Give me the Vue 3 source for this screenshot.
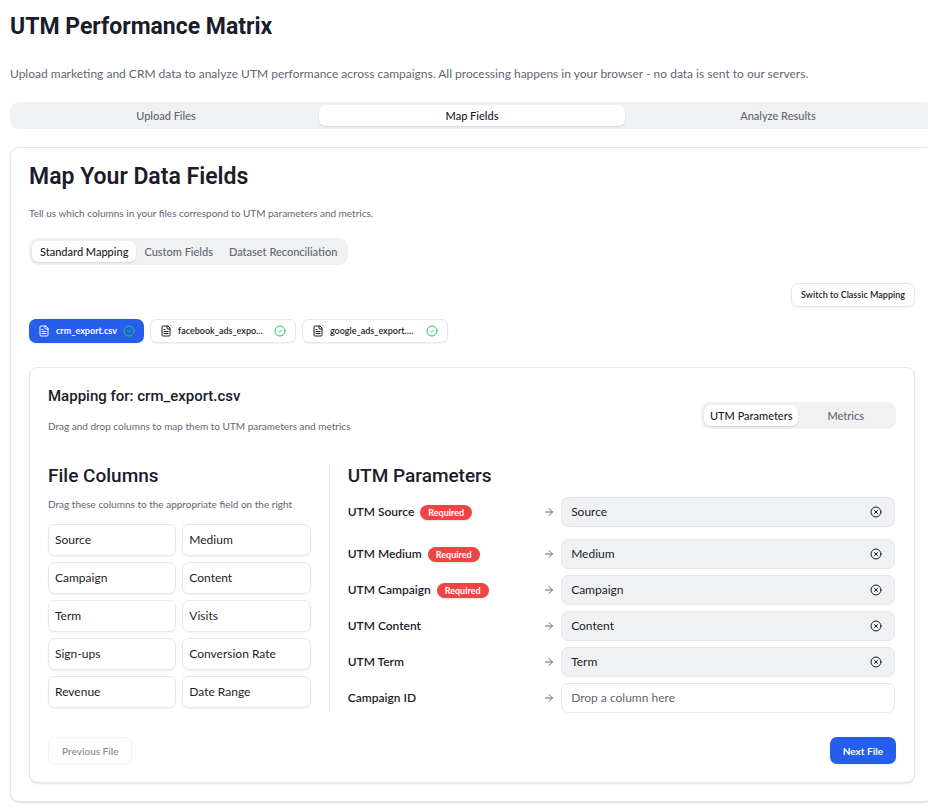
<script setup>
import { ref } from 'vue'

const steps = ['Upload Files', 'Map Fields', 'Analyze Results']
const modes = ['Standard Mapping', 'Custom Fields', 'Dataset Reconciliation']
const groups = ['UTM Parameters', 'Metrics']
const files = [
  { name: 'crm_export.csv', long: false },
  { name: 'facebook_ads_expo…', long: true },
  { name: 'google_ads_export.…', long: true },
]
const columns = [
  'Source', 'Medium', 'Campaign', 'Content', 'Term',
  'Visits', 'Sign-ups', 'Conversion Rate', 'Revenue', 'Date Range',
]
const fields = ref([
  { label: 'UTM Source', required: true, value: 'Source' },
  { label: 'UTM Medium', required: true, value: 'Medium' },
  { label: 'UTM Campaign', required: true, value: 'Campaign' },
  { label: 'UTM Content', required: false, value: 'Content' },
  { label: 'UTM Term', required: false, value: 'Term' },
  { label: 'Campaign ID', required: false, value: '' },
])

const step = ref('Map Fields')
const mode = ref('Standard Mapping')
const group = ref('UTM Parameters')
const file = ref(0)

function startDrag(event, column) {
  event.dataTransfer.setData('text/plain', column)
}
function dropOn(event, field) {
  field.value = event.dataTransfer.getData('text/plain')
}
</script>

<template>
  <main class="page">
    <div class="content">
      <h1>UTM Performance Matrix</h1>
      <p class="intro">Upload marketing and CRM data to analyze UTM performance across campaigns. All processing happens in your browser - no data is sent to our servers.</p>

      <nav class="tabs steps">
        <button v-for="s in steps" :key="s" type="button" class="tab" :class="{ active: s === step }" @click="step = s">{{ s }}</button>
      </nav>

      <section class="card outer">
        <h2>Map Your Data Fields</h2>
        <p class="note lead">Tell us which columns in your files correspond to UTM parameters and metrics.</p>

        <div class="tabs modes">
          <button v-for="m in modes" :key="m" type="button" class="tab" :class="{ active: m === mode }" @click="mode = m">{{ m }}</button>
        </div>

        <div class="switch-row">
          <button type="button" class="button small">Switch to Classic Mapping</button>
        </div>

        <div class="files">
          <button v-for="(f, i) in files" :key="f.name" type="button" class="button small file" :class="{ selected: i === file }" @click="file = i">
            <svg class="icon" viewBox="0 0 24 24" aria-hidden="true">
              <path d="M15 2H6a2 2 0 0 0-2 2v16a2 2 0 0 0 2 2h12a2 2 0 0 0 2-2V7Z" />
              <path d="M14 2v4a2 2 0 0 0 2 2h4M10 9H8M16 13H8M16 17H8" />
            </svg>
            <span class="file-name" :class="{ long: f.long }">{{ f.name }}</span>
            <svg class="icon done" viewBox="0 0 24 24" aria-hidden="true">
              <circle cx="12" cy="12" r="10" />
              <path d="m9 12 2 2 4-4" />
            </svg>
          </button>
        </div>

        <section class="card inner">
          <header class="inner-head">
            <div class="inner-title">
              <h3>Mapping for: crm_export.csv</h3>
              <p class="note">Drag and drop columns to map them to UTM parameters and metrics</p>
            </div>
            <div class="tabs groups">
              <button v-for="g in groups" :key="g" type="button" class="tab" :class="{ active: g === group }" @click="group = g">{{ g }}</button>
            </div>
          </header>

          <div class="mapping">
            <div class="source">
              <h4>File Columns</h4>
              <p class="note hint">Drag these columns to the appropriate field on the right</p>
              <ul class="columns">
                <li v-for="c in columns" :key="c" draggable="true" @dragstart="startDrag($event, c)">{{ c }}</li>
              </ul>
            </div>

            <div class="target">
              <h4>UTM Parameters</h4>
              <ul class="fields">
                <li v-for="f in fields" :key="f.label" class="field">
                  <span class="field-label">{{ f.label }}<span v-if="f.required" class="badge">Required</span></span>
                  <svg class="icon arrow" viewBox="0 0 24 24" aria-hidden="true">
                    <path d="M5 12h14M12 5l7 7-7 7" />
                  </svg>
                  <div class="drop" :class="{ filled: f.value }" @dragover.prevent @drop.prevent="dropOn($event, f)">
                    <span>{{ f.value || 'Drop a column here' }}</span>
                    <button v-if="f.value" type="button" class="clear" :aria-label="'Clear ' + f.label" @click="f.value = ''">
                      <svg class="icon" viewBox="0 0 24 24" aria-hidden="true">
                        <circle cx="12" cy="12" r="10" />
                        <path d="m15 9-6 6M9 9l6 6" />
                      </svg>
                    </button>
                  </div>
                </li>
              </ul>
            </div>
          </div>

          <footer class="actions">
            <button type="button" class="button" disabled>Previous File</button>
            <button type="button" class="button primary">Next File</button>
          </footer>
        </section>
      </section>
    </div>
  </main>
</template>

<style>
body {
  background: #fff;
}
</style>

<style scoped>
* {
  box-sizing: border-box;
}
.page {
  --ink: #1b1c2b;
  --muted: #636574;
  --line: #e5e7eb;
  --fill: #f0f1f3;
  --blue: #245eeb;
  overflow: hidden;
  padding: 11px 0 8px 10px;
  color: var(--ink);
  font-family: Lato, "Open Sans", sans-serif;
  font-size: 12px;
  line-height: 18px;
}
.content {
  margin-right: -6px;
}
h1, h2, h3, h4, p, ul {
  margin: 0;
  padding: 0;
}
ul {
  list-style: none;
}
h1, h2, h3, h4 {
  font-family: Roboto, sans-serif;
}
h1 {
  font-size: 23px;
  font-weight: 700;
  line-height: 32px;
}
h2 {
  font-size: 23px;
  font-weight: 600;
  line-height: 28px;
}
h3 {
  font-size: 15px;
  font-weight: 500;
  line-height: 20px;
}
h4 {
  font-size: 19px;
  font-weight: 500;
  line-height: 24px;
}
button {
  margin: 0;
  font: inherit;
  cursor: pointer;
}
.intro {
  margin-top: 22px;
  color: var(--muted);
}
.note {
  color: var(--muted);
  font-size: 10px;
  line-height: 16px;
}
.icon {
  display: block;
  flex: none;
  width: 12px;
  height: 12px;
  fill: none;
  stroke: currentColor;
  stroke-width: 2;
  stroke-linecap: round;
  stroke-linejoin: round;
}

.tabs {
  display: flex;
  padding: 3px;
  border-radius: 9px;
  background: var(--fill);
}
.tab {
  padding: 0 8px;
  border: 0;
  border-radius: 7px;
  background: none;
  color: var(--muted);
  font-size: 11px;
  font-weight: 500;
  line-height: 21px;
  white-space: nowrap;
}
.tab.active {
  background: #fff;
  color: var(--ink);
  box-shadow: 0 1px 2px rgb(0 0 0 / 12%);
}
.steps {
  margin: 19px 0 18px;
}
.steps .tab {
  flex: 1;
}
.modes {
  width: fit-content;
  margin-top: 17px;
}
.groups {
  display: grid;
  grid-template-columns: 1fr 1fr;
}
.groups .tab {
  padding: 0 6px;
}

.card {
  border: 1px solid var(--line);
  border-radius: 9px;
  background: #fff;
  box-shadow: 0 1px 2px rgb(0 0 0 / 12%);
}
.outer {
  padding: 15px 18px 18px;
}
.lead {
  margin-top: 14px;
}
.switch-row {
  display: flex;
  justify-content: flex-end;
  margin-top: 18px;
}
.button {
  display: flex;
  align-items: center;
  height: 27px;
  padding: 0 12px;
  border: 1px solid var(--line);
  border-radius: 7px;
  background: #fff;
  color: var(--ink);
  font-size: 10px;
  font-weight: 600;
  box-shadow: 0 1px 2px rgb(0 0 0 / 6%);
}
.button.small {
  height: 24px;
  padding: 0 9px;
  font-size: 9px;
}
.button.primary,
.button.selected {
  border: 0;
  background: var(--blue);
  color: #fff;
  font-weight: 700;
}
.button:disabled {
  opacity: 0.5;
  cursor: default;
}
.files {
  display: flex;
  gap: 6px;
  margin-top: 12px;
}
.button.file {
  gap: 6px;
}
.file-name.long {
  width: 90px;
  text-align: left;
}
.done {
  stroke: #22c55e;
}

.inner {
  margin-top: 24px;
  padding: 18px;
}
.inner-head {
  display: flex;
  align-items: center;
  justify-content: space-between;
}
.inner-title {
  padding-bottom: 10px;
}
.inner-head .note {
  margin-top: 12px;
}
.mapping {
  display: flex;
  margin-top: 20px;
}
.source {
  flex: none;
  width: calc(33.333% - 1px);
  padding-right: 18px;
  border-right: 1px solid var(--line);
}
.hint {
  margin: 8px 0 12px;
  white-space: nowrap;
}
.columns {
  display: grid;
  grid-template-columns: 1fr 1fr;
  gap: 6px;
}
.columns li {
  padding: 6px;
  border: 1px solid var(--line);
  border-radius: 7px;
  box-shadow: 0 1px 2px rgb(0 0 0 / 6%);
  cursor: grab;
}
.target {
  flex: 1;
  padding: 0 1px 0 18px;
}
.fields {
  display: flex;
  flex-direction: column;
  gap: 6px;
  margin-top: 9px;
}
.field {
  display: grid;
  grid-template-columns: 1fr 12px 61%;
  gap: 6px;
  align-items: center;
}
.field:first-child {
  margin-bottom: 6px;
}
.field-label {
  display: flex;
  align-items: center;
  gap: 6px;
  font-weight: 600;
}
.badge {
  padding: 0 8px;
  border-radius: 8px;
  background: #ef4444;
  color: #fff;
  font-size: 9px;
  font-weight: 700;
  line-height: 15px;
  box-shadow: 0 1px 2px rgb(0 0 0 / 12%);
}
.arrow {
  color: var(--muted);
}
.drop {
  display: flex;
  align-items: center;
  justify-content: space-between;
  height: 30px;
  padding: 0 9px;
  border: 1px solid var(--line);
  border-radius: 7px;
  color: var(--muted);
}
.drop.filled {
  background: var(--fill);
  color: var(--ink);
}
.clear {
  padding: 3px;
  border: 0;
  background: none;
  color: inherit;
}
.actions {
  display: flex;
  justify-content: space-between;
  margin-top: 24px;
}
.actions .button {
  padding: 0 13px;
}
</style>
